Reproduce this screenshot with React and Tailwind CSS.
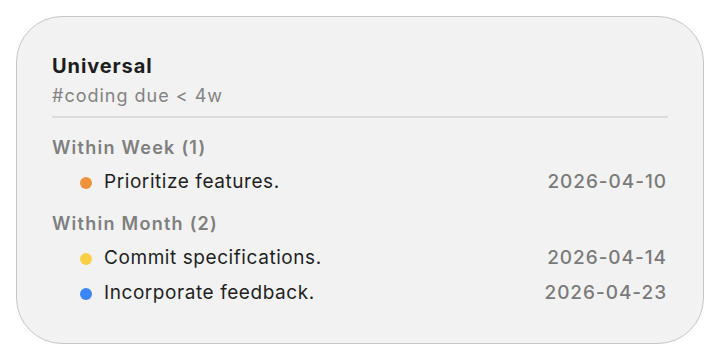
import React from "react";

const sections = [
  {
    title: "Within Week (1)",
    items: [{ text: "Prioritize features.", date: "2026-04-10", dot: "bg-[#f0913b]" }],
  },
  {
    title: "Within Month (2)",
    items: [
      { text: "Commit specifications.", date: "2026-04-14", dot: "bg-[#f8cf45]" },
      { text: "Incorporate feedback.", date: "2026-04-23", dot: "bg-[#3b86f7]" },
    ],
  },
];

export default function App() {
  return (
    <div
      className="w-[720px] h-[360px] bg-white p-4"
      style={{ fontFamily: "Inter, 'Noto Sans', 'Liberation Sans', sans-serif" }}
    >
      <div className="h-[328px] rounded-[46px] border border-[#c6c6c6] bg-[#f2f2f2] pl-[35px] pr-[35px] pt-[37px]">
        <div className="text-[20px] leading-[24px] font-bold tracking-[0.045em] text-[#1d1d1d]">Universal</div>
        <div className="mt-[6px] text-[18px] leading-[24px] tracking-[0.055em] text-[#838383]">#coding due &lt; 4w</div>
        <div className="mt-[8px] h-[2px] bg-[#dcdcdc]" />
        <div className="mt-[12px] flex flex-col gap-[6px]">
          {sections.map((s) => (
            <div key={s.title} className="flex flex-col">
              <div className="h-[35px] flex items-center text-[18px] font-semibold tracking-[0.07em] text-[#7f7f7f]">
                {s.title}
              </div>
              {s.items.map((it) => (
                <div key={it.text} className="h-[35px] flex items-center pl-[28px] text-[19px]">
                  <span className={`w-[12px] h-[12px] rounded-full ${it.dot}`} />
                  <span className="ml-[12px] flex-1 tracking-[0.03em] text-[#1f1f1f]">{it.text}</span>
                  <span className="font-medium tracking-[0.05em] text-[#7a7a7a] pr-[1px]">{it.date}</span>
                </div>
              ))}
            </div>
          ))}
        </div>
      </div>
    </div>
  );
}
